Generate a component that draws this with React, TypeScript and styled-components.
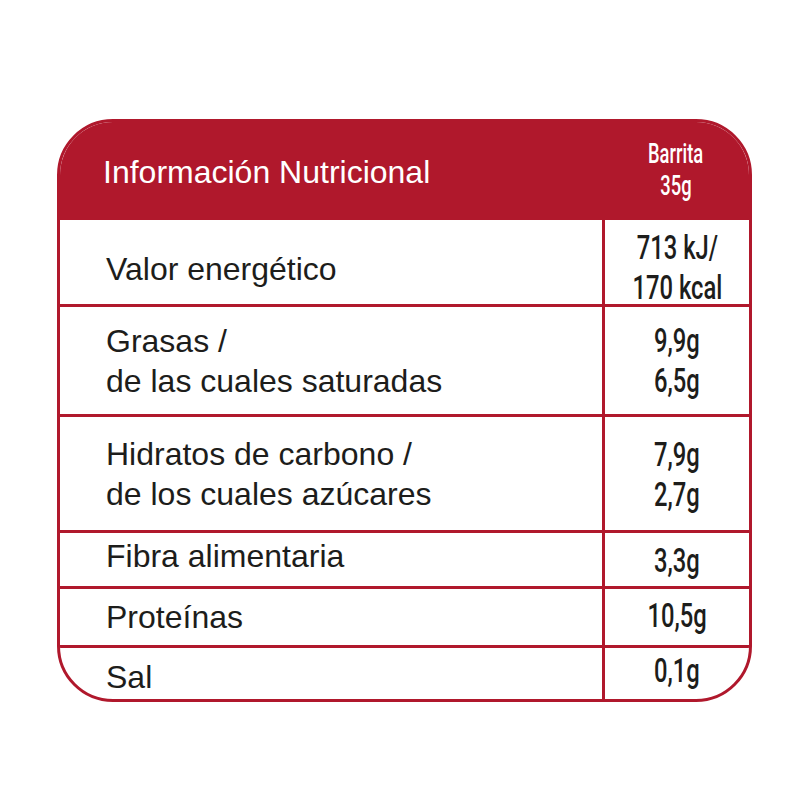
import React from "react";
import styled, { createGlobalStyle } from "styled-components";

const RED = "#b0182c";

const Global = createGlobalStyle`
  html, body { margin: 0; padding: 0; background: #ffffff; }
  body { font-family: "Liberation Sans", Arial, sans-serif; }
`;

const Page = styled.div`
  padding: 119px 0 0 57px;
`;

const Card = styled.div`
  box-sizing: border-box;
  width: 695px;
  border: 3px solid ${RED};
  border-radius: 56px;
  overflow: hidden;
  background: #fff;
`;

const Header = styled.div`
  display: grid;
  grid-template-columns: 542px 147px;
  height: 98px;
  background: ${RED};
  color: #fff;
`;

const Title = styled.div`
  align-self: center;
  padding-left: 43px;
  font-size: 32px;
  line-height: 40px;
  padding-top: 2px;
`;

const Condensed = styled.span<{ $scale?: number }>`
  display: inline-block;
  font-family: Roboto, "Liberation Sans", sans-serif;
  font-weight: 500;
  transform: scaleX(${(p) => p.$scale ?? 0.7});
  transform-origin: center;
  white-space: nowrap;
`;

const Serving = styled.div`
  display: flex;
  flex-direction: column;
  align-items: center;
  justify-content: center;
  font-size: 27px;
  line-height: 32px;
  padding-bottom: 2px;
`;

const Row = styled.div<{ $h: number; $first?: boolean }>`
  box-sizing: border-box;
  display: grid;
  grid-template-columns: 542px 147px;
  height: ${(p) => p.$h}px;
  border-top: ${(p) => (p.$first ? "none" : `3px solid ${RED}`)};
`;

const Label = styled.div<{ $dy: number }>`
  display: flex;
  flex-direction: column;
  justify-content: center;
  padding-left: 46px;
  padding-top: ${(p) => Math.max(0, p.$dy * 2)}px;
  padding-bottom: ${(p) => Math.max(0, -p.$dy * 2)}px;
  font-size: 32px;
  line-height: 40px;
  color: #1d1d1b;
  white-space: nowrap;
`;

const Value = styled.div<{ $dy: number }>`
  box-sizing: border-box;
  border-left: 3px solid ${RED};
  display: flex;
  flex-direction: column;
  align-items: center;
  justify-content: center;
  padding-top: ${(p) => Math.max(0, p.$dy * 2)}px;
  padding-bottom: ${(p) => Math.max(0, -p.$dy * 2)}px;
  font-size: 33px;
  line-height: 40px;
  color: #1d1d1b;
`;

type Item = { h: number; label: string[]; value: string[]; ldy: number; vdy: number };

const items: Item[] = [
  { h: 84, label: ["Valor energético"], value: ["713 kJ/", "170 kcal"], ldy: 5, vdy: 4 },
  { h: 110, label: ["Grasas /", "de las cuales saturadas"], value: ["9,9g", "6,5g"], ldy: 0, vdy: 0 },
  { h: 116, label: ["Hidratos de carbono /", "de los cuales azúcares"], value: ["7,9g", "2,7g"], ldy: 0, vdy: 1 },
  { h: 56, label: ["Fibra alimentaria"], value: ["3,3g"], ldy: -4, vdy: 1 },
  { h: 59, label: ["Proteínas"], value: ["10,5g"], ldy: 0, vdy: -1 },
  { h: 54, label: ["Sal"], value: ["0,1g"], ldy: 3, vdy: -3 },
];

export default function App() {
  return (
    <>
      <Global />
      <Page>
        <Card>
          <Header>
            <Title>Información Nutricional</Title>
            <Serving>
              <Condensed $scale={0.68}>Barrita</Condensed>
              <Condensed $scale={0.68}>35g</Condensed>
            </Serving>
          </Header>
          {items.map((it, i) => (
            <Row key={i} $h={it.h} $first={i === 0}>
              <Label $dy={it.ldy}>
                {it.label.map((l) => (
                  <span key={l}>{l}</span>
                ))}
              </Label>
              <Value $dy={it.vdy}>
                {it.value.map((v) => (
                  <Condensed key={v} $scale={0.72}>
                    {v}
                  </Condensed>
                ))}
              </Value>
            </Row>
          ))}
        </Card>
      </Page>
    </>
  );
}
